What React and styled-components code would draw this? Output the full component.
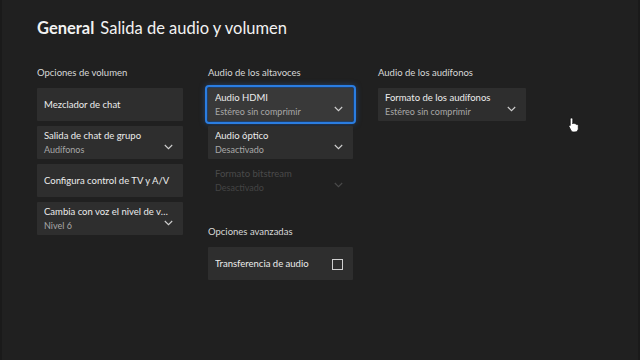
import React from "react";
import styled, { createGlobalStyle } from "styled-components";

const GlobalStyle = createGlobalStyle`
  html, body {
    margin: 0;
    padding: 0;
    background: #202020;
  }
  body {
    font-family: Lato, "Noto Sans", sans-serif;
    color: #e6e6e6;
  }
`;

const Page = styled.div`
  position: relative;
  width: 640px;
  height: 360px;
  box-sizing: border-box;
  padding: 17px 35px 0;
  background: #202020;
  border-left: 2px solid #1a1a1a;
  border-right: 2px solid #1a1a1a;
  overflow: hidden;
`;

const Title = styled.h1`
  margin: 0;
  font-size: 16.5px;
  line-height: 22px;
  font-weight: 400;
  color: #f2f2f2;
  display: flex;
  gap: 6px;

  strong {
    font-weight: 700;
  }
`;

const Columns = styled.div`
  display: grid;
  grid-template-columns: 146px 145px 148px;
  column-gap: 25px;
  margin-top: 27px;
  align-items: start;
`;

const Column = styled.div`
  display: flex;
  flex-direction: column;
`;

const SectionHeader = styled.div`
  font-size: 9.5px;
  line-height: 14px;
  color: #d8d8d8;
  margin: ${(p) => (p.$spaced ? "28px" : "0")} 0 8px;
`;

const Stack = styled.div`
  display: flex;
  flex-direction: column;
  gap: 5px;
`;

const Tile = styled.div`
  position: relative;
  height: 33px;
  box-sizing: border-box;
  padding: 1px 7px 0;
  display: flex;
  align-items: center;
  justify-content: space-between;
  background: ${(p) => (p.$disabled ? "transparent" : p.$focused ? "#393939" : "#2e2e2e")};
  outline: ${(p) => (p.$focused ? "2px solid #2a7de1" : "none")};
  outline-offset: 1px;
  box-shadow: ${(p) => (p.$focused ? "0 0 6px 2px rgba(40, 120, 230, 0.55)" : "none")};
  border-radius: 1px;
`;

const Texts = styled.div`
  flex: 1;
  display: flex;
  flex-direction: column;
  min-width: 0;
  gap: 2px;
`;

const Label = styled.span`
  font-size: 9.5px;
  line-height: 12px;
  color: ${(p) => (p.$disabled ? "#4a4a4a" : "#ececec")};
  white-space: nowrap;
  overflow: hidden;
  text-overflow: ellipsis;
`;

const Sub = styled.span`
  font-size: 9px;
  line-height: 12px;
  color: ${(p) => (p.$disabled ? "#444" : "#a8a8a8")};
  white-space: nowrap;
`;

const Chevron = styled.svg`
  flex: none;
  width: 9px;
  height: 6px;
  margin-left: ${(p) => (p.$low ? "-6px" : "4px")};
  margin-right: 3px;
  margin-top: ${(p) => (p.$low ? "8px" : "0")};
`;

const CheckBox = styled.span`
  flex: none;
  width: 9px;
  height: 9px;
  border: 1px solid #cfcfcf;
  margin-right: 3px;
`;

const Cursor = styled.svg`
  position: absolute;
  left: 566px;
  top: 117px;
  width: 12px;
  height: 16px;
`;

function ChevronIcon({ disabled, low }) {
  return (
    <Chevron viewBox="0 0 9 6" $low={low}>
      <path
        d="M0.8 1 L4.5 4.7 L8.2 1"
        fill="none"
        stroke={disabled ? "#4a4a4a" : "#cfcfcf"}
        strokeWidth="1.1"
      />
    </Chevron>
  );
}

function Setting({ label, value, chevron, focused, disabled, checkbox }) {
  return (
    <Tile $focused={focused} $disabled={disabled}>
      <Texts>
        <Label $disabled={disabled}>{label}</Label>
        {value && <Sub $disabled={disabled}>{value}</Sub>}
      </Texts>
      {chevron && <ChevronIcon disabled={disabled} low={!!value} />}
      {checkbox && <CheckBox />}
    </Tile>
  );
}

export default function App() {
  return (
    <>
      <GlobalStyle />
      <Page>
        <Title>
          <strong>General</strong>
          <span>Salida de audio y volumen</span>
        </Title>
        <Columns>
          <Column>
            <SectionHeader>Opciones de volumen</SectionHeader>
            <Stack>
              <Setting label="Mezclador de chat" />
              <Setting label="Salida de chat de grupo" value="Audífonos" chevron />
              <Setting label="Configura control de TV y A/V" />
              <Setting label="Cambia con voz el nivel de volumen" value="Nivel 6" chevron />
            </Stack>
          </Column>
          <Column>
            <SectionHeader>Audio de los altavoces</SectionHeader>
            <Stack>
              <Setting label="Audio HDMI" value="Estéreo sin comprimir" chevron focused />
              <Setting label="Audio óptico" value="Desactivado" chevron />
              <Setting label="Formato bitstream" value="Desactivado" chevron disabled />
            </Stack>
            <SectionHeader $spaced>Opciones avanzadas</SectionHeader>
            <Stack>
              <Setting label="Transferencia de audio" checkbox />
            </Stack>
          </Column>
          <Column>
            <SectionHeader>Audio de los audífonos</SectionHeader>
            <Stack>
              <Setting label="Formato de los audífonos" value="Estéreo sin comprimir" chevron />
            </Stack>
          </Column>
        </Columns>
        <Cursor viewBox="0 0 12 16">
          <path
            d="M3.5 1 C4.3 1 4.8 1.5 4.8 2.3 V7 L5.2 6.3 C5.9 5.9 6.7 6.2 6.9 6.9 C7.6 6.6 8.4 6.9 8.6 7.6 C9.3 7.3 10.2 7.7 10.3 8.5 V11.5 C10.3 13.5 9 15 7 15 H5.6 C4.3 15 3.4 14.3 2.8 13.2 L1 9.6 C0.7 8.9 1.3 8.2 2 8.4 L2.2 8.6 V2.3 C2.2 1.5 2.7 1 3.5 1 Z"
            fill="#fff"
            stroke="#111"
            strokeWidth="0.8"
          />
        </Cursor>
      </Page>
    </>
  );
}
